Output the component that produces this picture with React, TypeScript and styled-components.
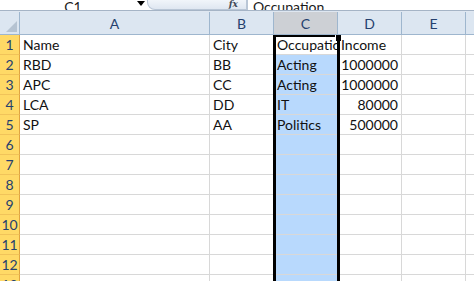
import React from "react";
import styled, { createGlobalStyle } from "styled-components";

const GlobalStyle = createGlobalStyle`
  html, body {
    margin: 0;
    padding: 0;
    background: #ffffff;
    overflow: hidden;
  }
  body {
    font-family: Lato, "Liberation Sans", sans-serif;
  }
`;

const Sheet = styled.div`
  position: relative;
  width: 474px;
  height: 281px;
  overflow: hidden;
`;

const FormulaBar = styled.div`
  display: flex;
  height: 10px;
  overflow: hidden;
  background: #ffffff;
  border-bottom: 1px solid #a5b4c6;
`;

const NameBox = styled.div`
  position: relative;
  width: 146px;
  display: flex;
  justify-content: center;
  align-items: flex-end;
  font-size: 14px;
  line-height: 14px;
  color: #1a1a1a;
`;

const ClippedText = styled.span`
  margin-bottom: -4px;
`;

const DropArrow = styled.span`
  position: absolute;
  right: 1px;
  top: 1px;
  width: 0;
  height: 0;
  border-left: 4px solid transparent;
  border-right: 4px solid transparent;
  border-top: 5px solid #000;
`;

const FxPill = styled.div`
  width: 90px;
  margin-left: 1px;
  background: linear-gradient(#f1f5fa, #dfe7f1);
  border: 1px solid #b9c6d6;
  border-top: none;
  border-radius: 0 0 0 8px;
  display: flex;
  justify-content: flex-end;
  align-items: flex-end;
  padding-right: 8px;
  font-family: "DejaVu Serif", serif;
  font-style: italic;
  font-weight: bold;
  font-size: 9px;
  color: #3f4a58;
  line-height: 9px;
`;

const FormulaInput = styled.div`
  flex: 1;
  border-left: 1px solid #b9c6d6;
  padding-left: 5px;
  display: flex;
  align-items: flex-end;
  font-size: 14px;
  line-height: 14px;
  color: #1a1a1a;
`;

const Gap = styled.div`
  height: 1px;
  background: #dfe7f1;
`;

const COLS = "20px 190px 64px 64px 64px 64px 64px";

const Row = styled.div<{ $h: number }>`
  display: grid;
  grid-template-columns: ${COLS};
  height: ${(p) => p.$h}px;
`;

const Corner = styled.div`
  position: relative;
  background: #dce6f1;
  border-right: 1px solid #9eb6ce;
  border-bottom: 1px solid #9eb6ce;
  &::after {
    content: "";
    position: absolute;
    right: 2px;
    bottom: 2px;
    border-left: 11px solid transparent;
    border-bottom: 11px solid #b5c3d2;
  }
`;

const ColHead = styled.div<{ $sel?: boolean }>`
  background: ${(p) => (p.$sel ? "#cdd0d5" : "#dce6f1")};
  border-right: 1px solid #9eb6ce;
  border-bottom: 1px solid #9eb6ce;
  display: flex;
  align-items: center;
  justify-content: center;
  font-size: 14px;
  color: #25406e;
`;

const RowHead = styled.div`
  background: #ffd966;
  border-right: 1px solid #e0a440;
  border-bottom: 1px solid #f1c35a;
  display: flex;
  align-items: flex-end;
  justify-content: center;
  padding-bottom: 1px;
  font-size: 14px;
  line-height: 16px;
  color: #25406e;
`;

const Cell = styled.div<{ $sel?: boolean; $right?: boolean }>`
  background: ${(p) => (p.$sel ? "#b8d9fd" : "#ffffff")};
  border-right: 1px solid #d8d8d8;
  border-bottom: 1px solid #d8d8d8;
  display: flex;
  align-items: flex-end;
  justify-content: ${(p) => (p.$right ? "flex-end" : "flex-start")};
  padding: 0 3px 1px 3px;
  overflow: hidden;
  white-space: nowrap;
  font-size: 14px;
  line-height: 16px;
  color: #111111;
`;

const Selection = styled.div`
  position: absolute;
  left: 273px;
  top: 35px;
  width: 61px;
  height: 260px;
  border-left: 3px solid #000;
  border-right: 3px solid #000;
  border-top: 2px solid #000;
  pointer-events: none;
`;

const Handle = styled.div`
  position: absolute;
  left: 335px;
  top: 35px;
  width: 5px;
  height: 6px;
  background: #000;
  border-left: 1px solid #fff;
`;

type Rec = { name: string; city: string; job: string; income: string };

const data: Rec[] = [
  { name: "RBD", city: "BB", job: "Acting", income: "1000000" },
  { name: "APC", city: "CC", job: "Acting", income: "1000000" },
  { name: "LCA", city: "DD", job: "IT", income: "80000" },
  { name: "SP", city: "AA", job: "Politics", income: "500000" },
];

const letters = ["A", "B", "C", "D", "E", ""];

export default function App() {
  const empty = Array.from({ length: 8 }, (_, i) => i + 6);

  return (
    <Sheet>
      <GlobalStyle />
      <FormulaBar>
        <NameBox>
          <ClippedText>C1</ClippedText>
          <DropArrow />
        </NameBox>
        <FxPill>fx</FxPill>
        <FormulaInput>
          <ClippedText>Occupation</ClippedText>
        </FormulaInput>
      </FormulaBar>
      <Gap />
      <Row $h={23}>
        <Corner />
        {letters.map((l, i) => (
          <ColHead key={i} $sel={l === "C"}>
            {l}
          </ColHead>
        ))}
      </Row>
      <Row $h={20}>
        <RowHead>1</RowHead>
        <Cell>Name</Cell>
        <Cell>City</Cell>
        <Cell>Occupation</Cell>
        <Cell>Income</Cell>
        <Cell />
        <Cell />
      </Row>
      {data.map((r, i) => (
        <Row $h={20} key={r.name}>
          <RowHead>{i + 2}</RowHead>
          <Cell>{r.name}</Cell>
          <Cell>{r.city}</Cell>
          <Cell $sel>{r.job}</Cell>
          <Cell $right>{r.income}</Cell>
          <Cell />
          <Cell />
        </Row>
      ))}
      {empty.map((n) => (
        <Row $h={20} key={n}>
          <RowHead>{n}</RowHead>
          <Cell />
          <Cell />
          <Cell $sel />
          <Cell />
          <Cell />
          <Cell />
        </Row>
      ))}
      <Selection />
      <Handle />
    </Sheet>
  );
}
